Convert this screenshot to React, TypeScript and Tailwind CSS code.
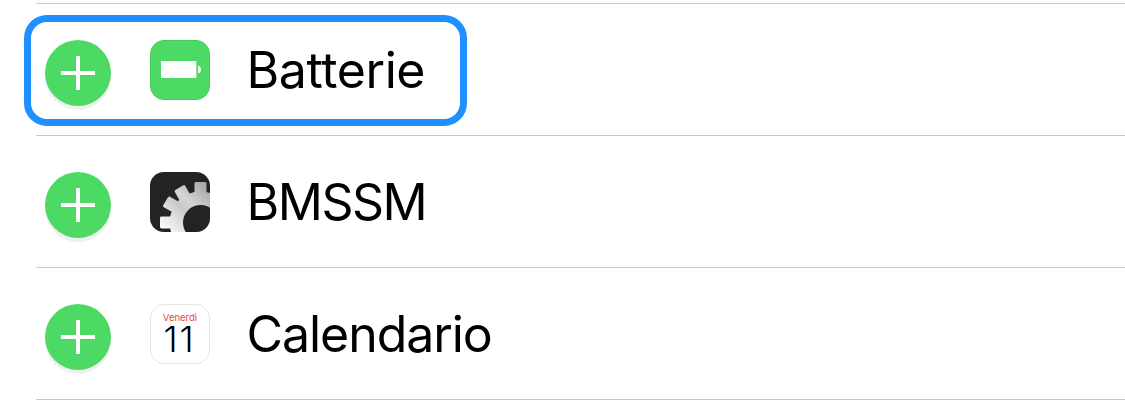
import type { ReactNode } from 'react';

function AddButton() {
  return (
    <button
      type="button"
      aria-label="+"
      className="flex size-[66px] shrink-0 items-center justify-center rounded-full bg-[#4cd964] shadow-[0_4px_0_#f0f0f0]"
    >
      <svg width="34" height="34" viewBox="0 0 34 34" aria-hidden="true">
        <path d="M0 17H34M17 0V34" stroke="#fff" strokeWidth="4" />
      </svg>
    </button>
  );
}

function BatteryIcon() {
  return (
    <svg width="60" height="60" viewBox="0 0 60 60" aria-hidden="true">
      <rect x="0.5" y="0.5" width="59" height="59" rx="13.5" fill="#4cd964" stroke="#48cb5e" />
      <rect x="11" y="21" width="35.3" height="17" fill="#fff" />
      <path d="M48 26C52 26 52 33.3 48 33.3Z" fill="#fff" />
    </svg>
  );
}

function GearIcon() {
  return (
    <svg width="60" height="60" viewBox="0 0 60 60" aria-hidden="true">
      <defs>
        <clipPath id="tile">
          <rect width="60" height="60" rx="14" />
        </clipPath>
        <linearGradient id="steel" gradientUnits="userSpaceOnUse" x1="14" y1="58" x2="58" y2="14">
          <stop offset="0" stopColor="#fafafa" />
          <stop offset="0.2" stopColor="#e6e6e6" />
          <stop offset="0.45" stopColor="#c9c9c9" />
          <stop offset="0.6" stopColor="#d4d4d4" />
          <stop offset="1" stopColor="#a6a6a6" />
        </linearGradient>
      </defs>
      <g clipPath="url(#tile)">
        <rect width="60" height="60" fill="#232323" />
        <g fill="url(#steel)">
          <circle cx="50.5" cy="50.5" r="31" />
          <path d="M10 46Q10 44.6 11.4 44.6H24V56.5H11.4Q10 56.5 10 55.1Z" />
          <path d="M44.5 11.4Q44.5 10 45.9 10H55.1Q56.5 10 56.5 11.4V24H44.5Z" />
          <path d="M13.2 33.3L18 25.3Q18.8 24.1 20 24.8L31 31L24 41L13.8 35.2Q12.4 34.5 13.2 33.3Z" />
          <path d="M25.3 18L33.3 13.2Q34.5 12.4 35.2 13.8L41 24L31 31L24.8 20Q24.1 18.8 25.3 18Z" />
        </g>
        <circle cx="50.5" cy="50.5" r="17.5" fill="#232323" />
      </g>
    </svg>
  );
}

function CalendarIcon() {
  return (
    <div className="flex size-[60px] flex-col items-center rounded-[14px] border border-[#e6e6e6] bg-white">
      <span className="mt-[7px] text-[9.5px] leading-[11px] text-[#e8453c]">Venerdì</span>
      <span className="pr-px text-[36px] leading-[32px] font-light tracking-[1.8px] text-black">11</span>
    </div>
  );
}

function Row({ icon, label, spacing, marked = false }: { icon: ReactNode; label: string; spacing: string; marked?: boolean }) {
  return (
    <li className="relative ml-9 flex h-[132px] items-start border-b border-[#c8c7cc] pt-9 pl-[9px]">
      {marked && (
        <div className="absolute top-[11px] -left-[12px] h-[111px] w-[443px] rounded-[23px] border-[7px] border-[#1e90ff]" />
      )}
      <AddButton />
      <div className="ml-[39px] size-[60px] shrink-0">{icon}</div>
      <span className={`ml-[36.5px] text-[50px] leading-[60px] whitespace-nowrap text-black ${spacing}`}>{label}</span>
    </li>
  );
}

export default function App() {
  return (
    <main className="h-[407px] overflow-hidden bg-white font-['Inter','Liberation_Sans',sans-serif]">
      <div className="mt-[3px] ml-9 h-px bg-[#c8c7cc]" />
      <ul>
        <Row icon={<BatteryIcon />} label="Batterie" spacing="tracking-[-0.4px]" marked />
        <Row icon={<GearIcon />} label="BMSSM" spacing="tracking-[-1.5px]" />
        <Row icon={<CalendarIcon />} label="Calendario" spacing="tracking-[-1.05px]" />
      </ul>
    </main>
  );
}
